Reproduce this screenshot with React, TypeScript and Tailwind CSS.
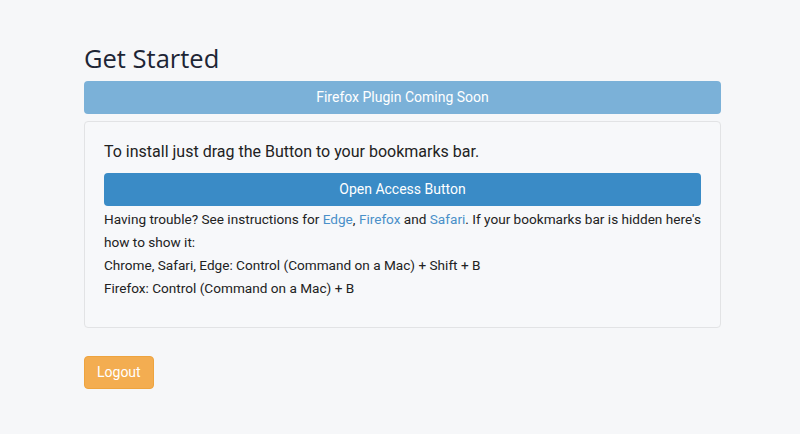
import React from "react";

function App() {
  return (
    <div className="min-h-[434px] w-full bg-[#f6f7f9] font-['Roboto',sans-serif] text-[#222]">
      <div className="ml-[84px] w-[637px] pt-[42px]">
        <h1 className="font-['Open_Sans',sans-serif] text-[25.5px] leading-[32px] text-[#1d2535] mb-[7px]">
          Get Started
        </h1>

        <div className="h-[33px] rounded-[4px] bg-[#7bb1d8] text-white text-[14px] flex items-center justify-center">
          Firefox Plugin Coming Soon
        </div>

        <div className="mt-[7px] rounded-[4px] border border-[#e2e3e5] bg-[#f7f8fa] px-[19px] pt-[18px] pb-[27px]">
          <p className="text-[16px] leading-[24px] text-[#222]">
            To install just drag the Button to your bookmarks bar.
          </p>
          <a className="mt-[9px] h-[33px] rounded-[4px] bg-[#3a8bc6] text-white text-[14px] flex items-center justify-center">
            Open Access Button
          </a>
          <div className="mt-[2px] text-[13.6px] leading-[23px] text-[#222]">
            <p>
              Having trouble? See instructions for <span className="text-[#4a90c9]">Edge</span>,{" "}
              <span className="text-[#4a90c9]">Firefox</span> and <span className="text-[#4a90c9]">Safari</span>. If
              your bookmarks bar is hidden here's how to show it:
            </p>
            <p>Chrome, Safari, Edge: Control (Command on a Mac) + Shift + B</p>
            <p>Firefox: Control (Command on a Mac) + B</p>
          </div>
        </div>

        <button className="mt-[28px] h-[33px] px-[12px] rounded-[4px] border border-[#eea43f] bg-[#f3ad51] text-white text-[14px]">
          Logout
        </button>
      </div>
    </div>
  );
}

export default App;
